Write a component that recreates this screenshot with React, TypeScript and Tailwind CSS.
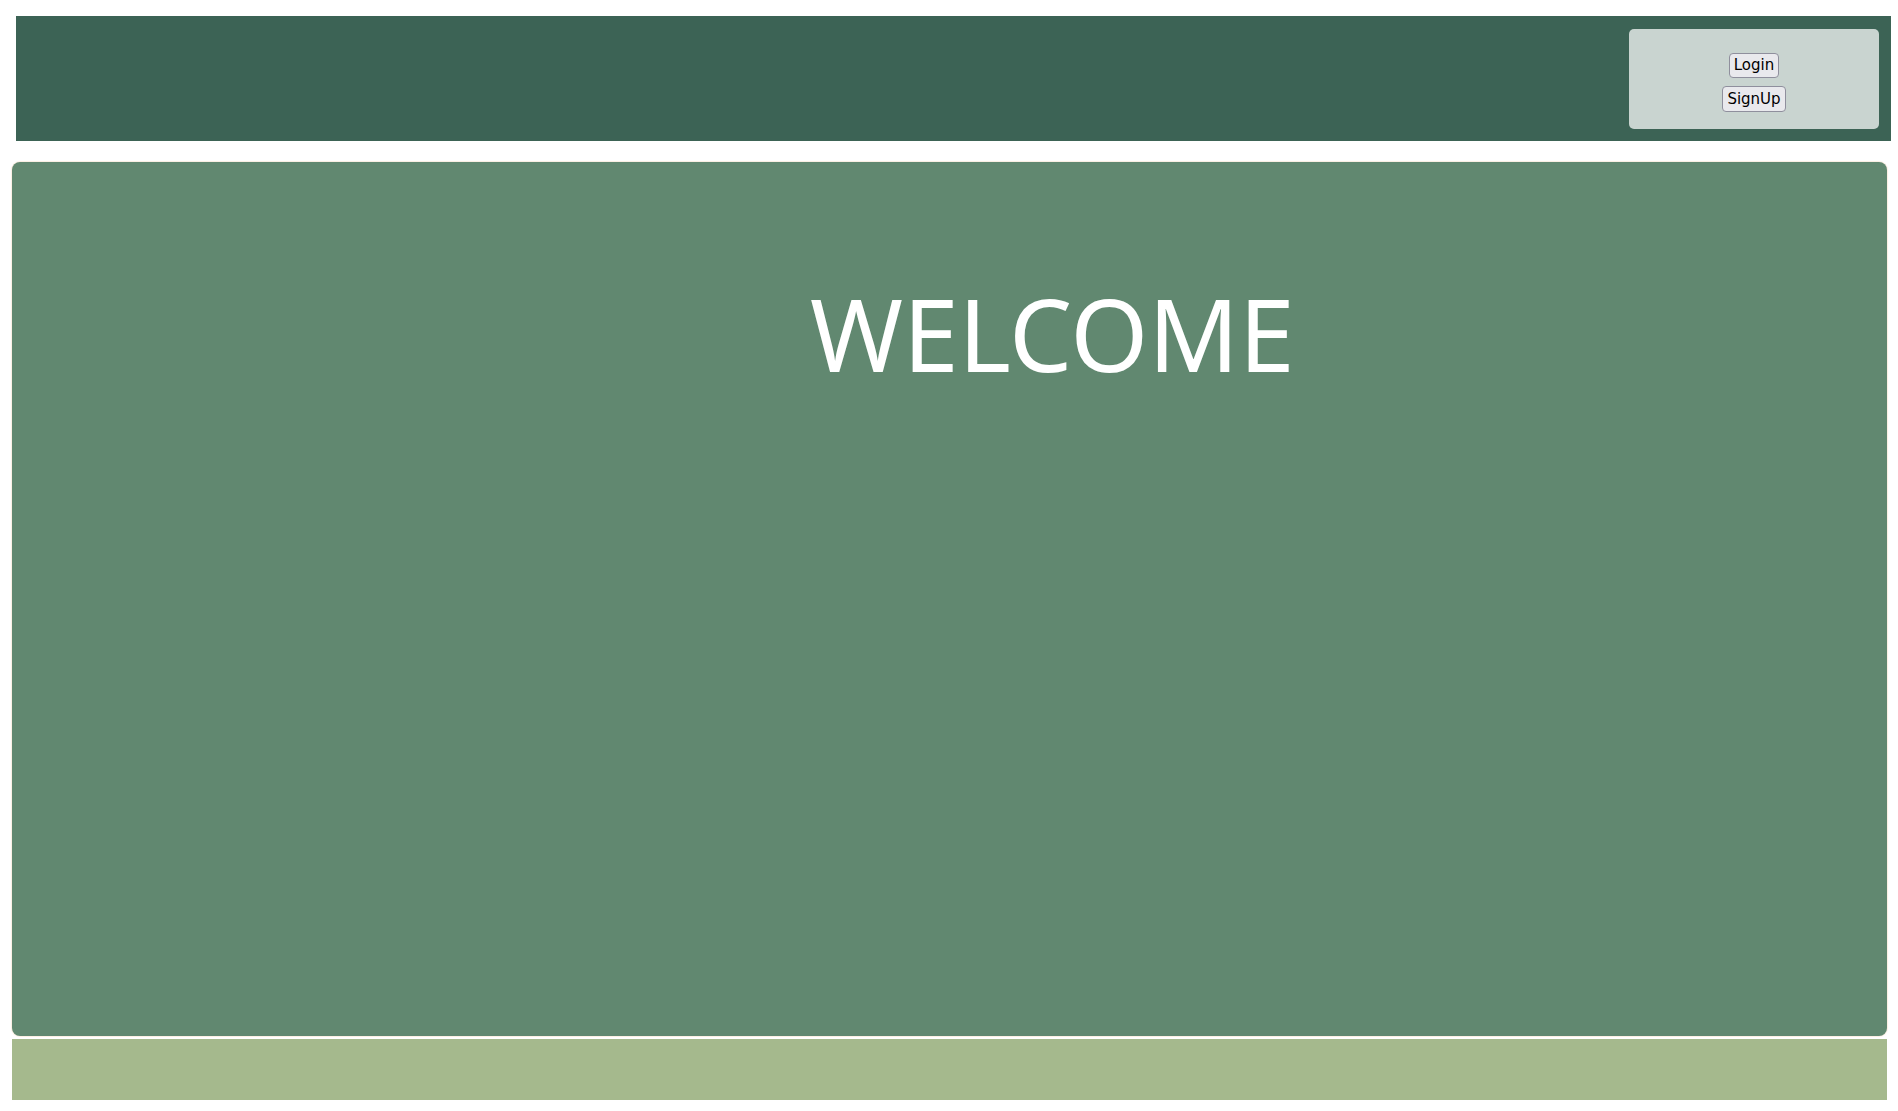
export default function App() {
  return (
    <div className="min-h-[1111px] bg-white pt-4 font-['DejaVu_Sans',sans-serif]">
      <header className="ml-4 mr-[7px] flex h-[125px] justify-end bg-[#3c6355] pr-3 pt-[13px]">
        <div className="flex h-[100px] w-[250px] flex-col items-center justify-center gap-[8px] rounded-[5px] bg-[#c9d4d0] pt-[7px]">
          <button className="h-[25px] rounded-[4px] border border-[#8f8f9d] bg-[#e9e9ed] px-[4px] text-[15px] leading-none text-black">
            Login
          </button>
          <button className="h-[26px] rounded-[4px] border border-[#8f8f9d] bg-[#e9e9ed] px-[4px] text-[15px] leading-none text-black">
            SignUp
          </button>
        </div>
      </header>

      <main className="mx-3 mt-[21px] h-[874px] w-[1875px] rounded-[8px] bg-[#618870] shadow-[0_0_1px_1px_#fbeee2]">
        <h1 className="pl-[798px] pt-[121px] text-[100px] leading-none font-normal text-white font-['Noto_Sans',sans-serif]">
          WELCOME
        </h1>
      </main>

      <footer className="mx-3 mt-[3px] h-[61px] w-[1875px] bg-[#a5b98d]"></footer>
    </div>
  );
}
